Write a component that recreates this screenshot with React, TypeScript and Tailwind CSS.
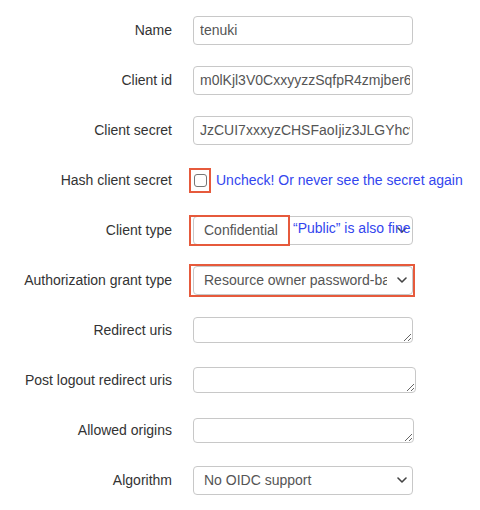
import type { ReactNode } from "react";

const field = "h-[29px] w-[220px] rounded-[4px] border border-[#c8c8c8] bg-white text-[14px] text-[#555]";
const redBox = "pointer-events-none absolute border-2 border-[#e65a3c]";

function Chevron() {
  return (
    <svg width="10" height="6" viewBox="0 0 10 6" className="shrink-0">
      <path d="M1 1l4 4 4-4" fill="none" stroke="#444" strokeWidth="1.6" strokeLinecap="round" strokeLinejoin="round" />
    </svg>
  );
}

function Select({ value }: { value: string }) {
  return (
    <div className={`${field} flex items-center gap-[10px] pl-[10px] pr-[5px]`}>
      <span className="min-w-0 flex-1 overflow-hidden whitespace-nowrap">{value}</span>
      <Chevron />
    </div>
  );
}

function Row({ label, children }: { label: string; children: ReactNode }) {
  return (
    <div className="flex h-[50px] items-center">
      <div className="w-[172px] shrink-0 text-right text-[14px] text-[#333]">{label}</div>
      <div className="relative ml-[21px] flex items-center">{children}</div>
    </div>
  );
}

export default function App() {
  return (
    <div className="min-h-[510px] w-[480px] bg-white pt-[5px]" style={{ fontFamily: '"Liberation Sans", Arial, sans-serif' }}>
      <Row label="Name">
        <input readOnly value="tenuki" className={`${field} px-[6px] outline-none`} />
      </Row>
      <Row label="Client id">
        <input readOnly value="m0lKjl3V0CxxyyzzSqfpR4zmjber6qXw" className={`${field} pl-[6px] pr-[2px] outline-none`} />
      </Row>
      <Row label="Client secret">
        <input readOnly value="JzCUI7xxxyzCHSFaoIjiz3JLGYhcwPq" className={`${field} pl-[6px] pr-[2px] outline-none`} />
      </Row>
      <Row label="Hash client secret">
        <div className="-ml-[4px] flex items-center">
          <div className="relative flex h-[25px] w-[22px] items-center justify-center">
            <span className="block h-[13px] w-[13px] rounded-[3px] border border-[#767676] bg-white" />
            <span className={`${redBox} inset-0`} />
          </div>
          <span className="ml-[5px] whitespace-nowrap text-[14px] text-[#3346ee]">Uncheck! Or never see the secret again</span>
        </div>
      </Row>
      <Row label="Client type">
        <Select value="Confidential" />
        <span className={`${redBox} -left-[4px] -top-[1px] h-[31px] w-[101px]`} />
        <span className="pointer-events-none absolute left-[100px] top-[2px] whitespace-nowrap text-[14px] text-[#3346ee]">
          “Public” is also fine
        </span>
      </Row>
      <Row label="Authorization grant type">
        <Select value="Resource owner password-based" />
        <span className={`${redBox} -left-[4px] -right-[2px] -top-[2px] -bottom-[2px]`} />
      </Row>
      <Row label="Redirect uris">
        <textarea readOnly className="block h-[26px] w-[220px] rounded-[4px] border border-[#c8c8c8] bg-white outline-none" />
      </Row>
      <Row label="Post logout redirect uris">
        <textarea readOnly className="block h-[26px] w-[223px] rounded-[4px] border border-[#c8c8c8] bg-white outline-none" />
      </Row>
      <Row label="Allowed origins">
        <textarea readOnly className="block h-[25px] w-[221px] rounded-[4px] border border-[#c8c8c8] bg-white outline-none" />
      </Row>
      <Row label="Algorithm">
        <Select value="No OIDC support" />
      </Row>
    </div>
  );
}
